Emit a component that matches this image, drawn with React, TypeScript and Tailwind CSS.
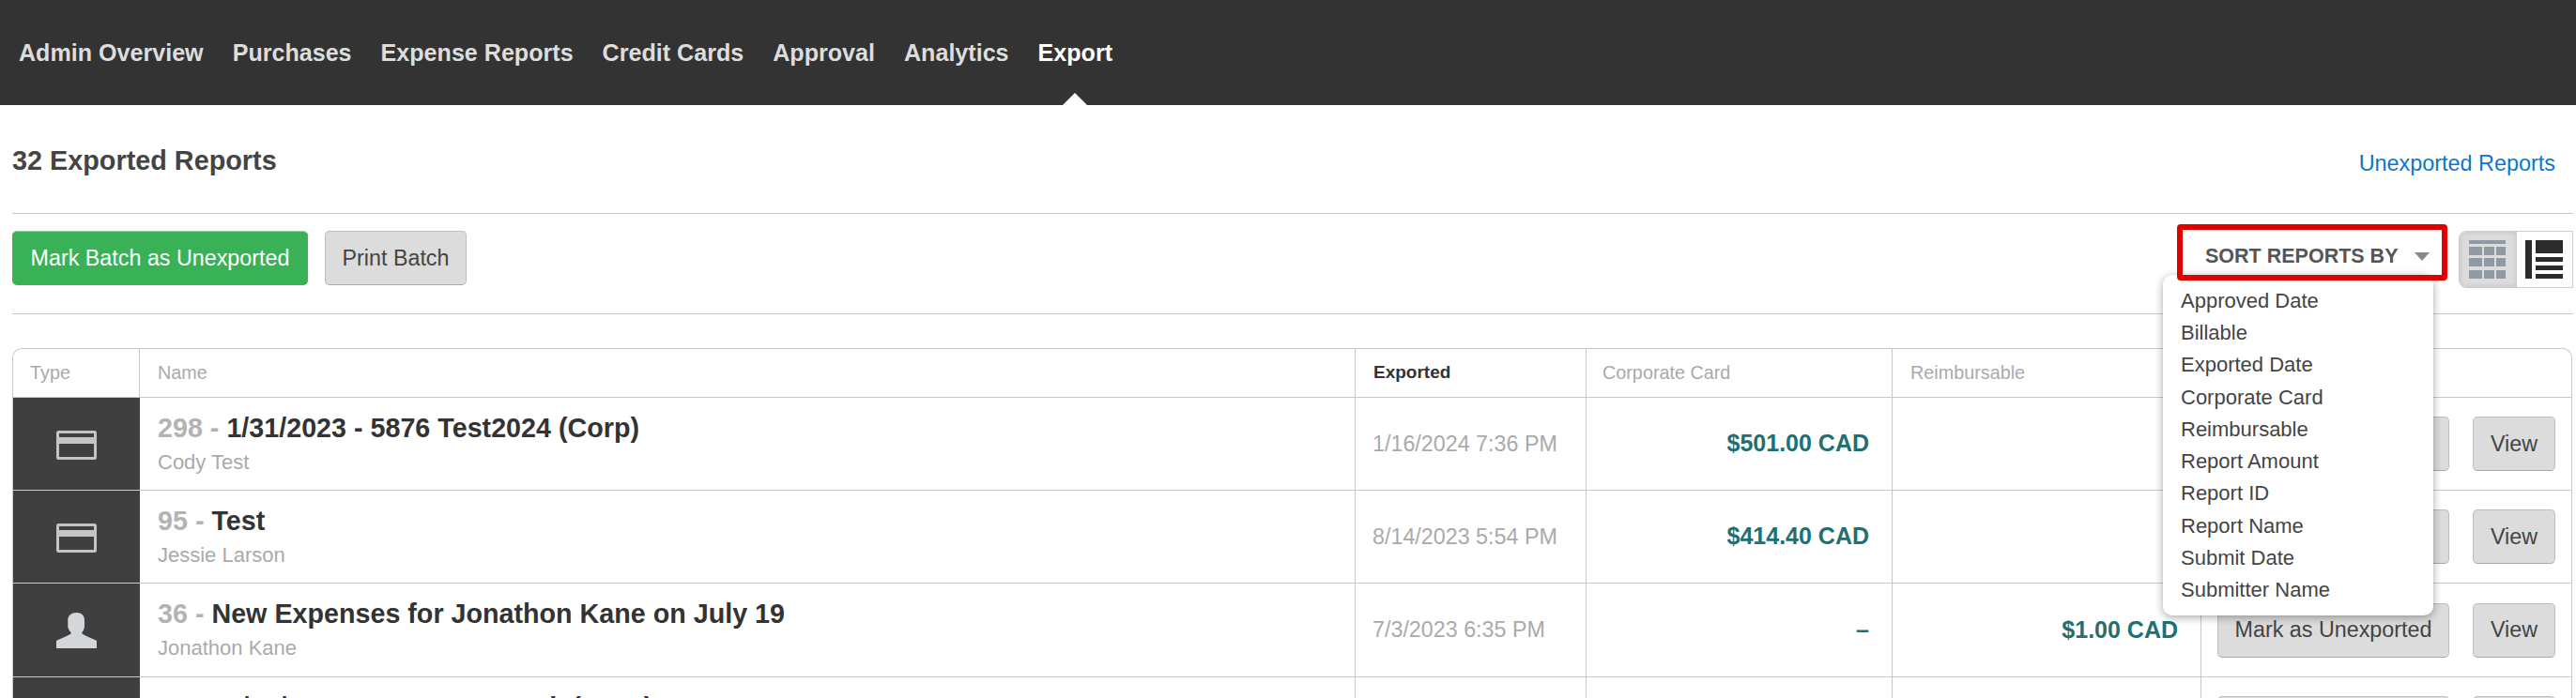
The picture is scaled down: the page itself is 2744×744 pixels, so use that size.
const navItems = ["Admin Overview", "Purchases", "Expense Reports", "Credit Cards", "Approval", "Analytics"];
const sortItems = ["Approved Date", "Billable", "Exported Date", "Corporate Card", "Reimbursable", "Report Amount", "Report ID", "Report Name", "Submit Date", "Submitter Name"];
const rows = [
  { id: "298", title: "1/31/2023 - 5876 Test2024 (Corp)", who: "Cody Test", date: "1/16/2024 7:36 PM", corp: "$501.00 CAD", reimb: "", kind: "card", h: "h-[99px]" },
  { id: "95", title: "Test", who: "Jessie Larson", date: "8/14/2023 5:54 PM", corp: "$414.40 CAD", reimb: "", kind: "card", h: "h-[99px]" },
  { id: "36", title: "New Expenses for Jonathon Kane on July 19", who: "Jonathon Kane", date: "7/3/2023 6:35 PM", corp: "–", reimb: "$1.00 CAD", kind: "person", h: "h-[100px]" },
  { id: "243", title: "5/31/2023 - 4204 Test Rock (Corp)", who: "Cody Test", date: "6/12/2023 4:10 PM", corp: "$250.00 CAD", reimb: "", kind: "card", h: "h-[99px]" },
];
const grid = "grid grid-cols-[135px_1295px_246px_326px_329px_1fr]";
const cell = "border-r border-[#c8c8c8]";

function CardIcon() {
  return (
    <svg className="mt-[2px]" width="43" height="31" viewBox="0 0 43 31" fill="none">
      <rect x="1.5" y="1.5" width="40" height="28" rx="1" stroke="#c4c4c4" strokeWidth="3" />
      <rect x="1" y="7" width="41" height="7" fill="#c4c4c4" />
    </svg>
  );
}

function PersonIcon() {
  return (
    <svg width="43" height="38" viewBox="0 0 43 38">
      <path d="M21.5 0C27 0 30 3 30 8V14C30 18 28 20 27 22C30 25 38 27 43 30V38H0V30C5 27 13 25 16 22C15 20 12.3 18 12.3 14V8C12.3 3 16 0 21.5 0Z" fill="#d3d7da" />
    </svg>
  );
}

function GridIcon() {
  const ys = [7, 19, 32];
  const xs: [number, number][] = [[0, 14], [16, 11], [29, 10]];
  return (
    <svg width="39" height="41" viewBox="0 0 39 41" fill="#8f9aa5">
      <rect x="0" y="0" width="39" height="4" />
      {ys.map((y) => xs.map(([x, w]) => <rect key={`${x}-${y}`} x={x} y={y} width={w} height="9" />))}
    </svg>
  );
}

function ListIcon() {
  return (
    <svg width="40" height="41" viewBox="0 0 40 41" fill="#2b2b2b">
      <rect x="0" y="0" width="7" height="41" />
      <rect x="11" y="0" width="29" height="14" />
      <rect x="11" y="18" width="29" height="5" />
      <rect x="11" y="27" width="29" height="5" />
      <rect x="11" y="36" width="29" height="5" />
    </svg>
  );
}

function GrayButton({ children, className }: { children: React.ReactNode; className: string }) {
  return (
    <button className={`h-[58px] rounded-[5px] border border-[#bdbdbd] border-b-[#a9a9a9] bg-[#dcdcdc] text-[23.3px] text-[#444] ${className}`}>
      {children}
    </button>
  );
}

export default function App() {
  return (
    <div className="h-[744px] w-[2744px] overflow-hidden bg-white font-['Liberation_Sans',Arial,sans-serif]">
      <nav className="flex h-[112px] items-stretch gap-[31px] bg-[#333333] pl-[20px] text-[25.1px] font-bold text-[#dddddd]">
        {navItems.map((n) => (
          <span key={n} className="flex items-center pt-[2px]">{n}</span>
        ))}
        <span className="relative flex items-center pt-[2px] text-white">
          Export
          <span className="absolute bottom-0 left-1/2 -translate-x-1/2 border-x-[13px] border-b-[13px] border-x-transparent border-b-white" />
        </span>
      </nav>
      <main className="pl-[13px] pr-[3px]">
        <header className="flex h-[116px] items-center justify-between border-b border-[#c8c8c8] pr-[19px] pt-[8px]">
          <h1 className="-mt-[3px] text-[28.8px] font-bold text-[#444]">32 Exported Reports</h1>
          <a className="mt-[2px] text-[23.4px] text-[#0b76d1]">Unexported Reports</a>
        </header>
        <div className="flex h-[107px] items-start justify-between border-b border-[#c8c8c8] pt-[18px]">
          <div className="flex gap-[18px]">
            <button className="h-[58px] w-[315px] rounded-[5px] border border-[#6aa51e] border-t-[#8fd39f] bg-[#39b257] text-[23.3px] text-white">
              Mark Batch as Unexported
            </button>
            <GrayButton className="w-[151px]">Print Batch</GrayButton>
          </div>
          <div className="flex items-start gap-[12px]">
            <div className="relative -mt-[7px]">
              <div className="absolute left-[-15px] top-[54px] z-10 h-[363px] w-[288px] rounded-[10px] bg-white pl-[19px] pt-[10px] text-[22px] text-[#444] shadow-[0_2px_10px_rgba(0,0,0,0.35)]">
                {sortItems.map((s) => (
                  <div key={s} className="flex h-[34.3px] items-center">{s}</div>
                ))}
              </div>
              <div className="relative z-20 flex h-[60px] w-[288px] items-center rounded-[4px] border-[6px] border-[#e10000] pl-[24px] pt-[8px] text-[21.5px] font-bold text-[#555]">
                SORT REPORTS BY
                <span className="ml-[18px] mt-[1px] border-x-[8.5px] border-t-[9px] border-x-transparent border-t-[#888]" />
              </div>
            </div>
            <div className="flex h-[61px] w-[122px] overflow-hidden rounded-l-[8px] border border-[#cccccc]">
              <div className="flex w-[61px] items-center justify-center bg-[#dcdcdc] pr-[2px] shadow-[inset_0_0_6px_rgba(0,0,0,0.12)]">
                <GridIcon />
              </div>
              <div className="flex flex-1 items-center justify-center bg-white pr-[2px]">
                <ListIcon />
              </div>
            </div>
          </div>
        </div>
        <section className="mr-[1px] mt-[36px] rounded-t-[10px] border border-b-0 border-[#c8c8c8]">
          <div className={`${grid} h-[52px] items-stretch border-b border-[#c8c8c8] text-[19.8px] text-[#aaa]`}>
            <div className={`${cell} flex items-center pl-[18px]`}>Type</div>
            <div className={`${cell} flex items-center pl-[19px]`}>Name</div>
            <div className={`${cell} flex items-center pl-[19px] text-[19px] font-bold text-[#333]`}>Exported</div>
            <div className={`${cell} flex items-center pl-[17px]`}>Corporate Card</div>
            <div className={`${cell} flex items-center pl-[19px]`}>Reimbursable</div>
            <div />
          </div>
          {rows.map((r) => (
            <div key={r.id} className={`${grid} ${r.h} border-b border-[#c8c8c8]`}>
              <div className="flex items-center justify-center bg-[#3f3f3f]">
                {r.kind === "card" ? <CardIcon /> : <PersonIcon />}
              </div>
              <div className={`${cell} pl-[19px] pt-[14px]`}>
                <div className="text-[28.7px] font-bold leading-[36px] text-[#333]">
                  <span className="text-[#b3b3b3]">{r.id} - </span>
                  {r.title}
                </div>
                <div className="mt-[4px] text-[22px] leading-[30px] text-[#aaa]">{r.who}</div>
              </div>
              <div className={`${cell} flex items-center pl-[18px] text-[23.3px] text-[#aaa]`}>{r.date}</div>
              <div className={`${cell} flex items-center justify-end pr-[24px] text-[25px] font-bold text-[#1f6f73]`}>{r.corp}</div>
              <div className={`${cell} flex items-center justify-end pr-[24px] text-[25px] font-bold text-[#1f6f73]`}>{r.reimb}</div>
              <div className="flex items-center gap-[25px] pl-[17px]">
                <GrayButton className="w-[247px]">Mark as Unexported</GrayButton>
                <GrayButton className="w-[88px]">View</GrayButton>
              </div>
            </div>
          ))}
        </section>
      </main>
    </div>
  );
}
